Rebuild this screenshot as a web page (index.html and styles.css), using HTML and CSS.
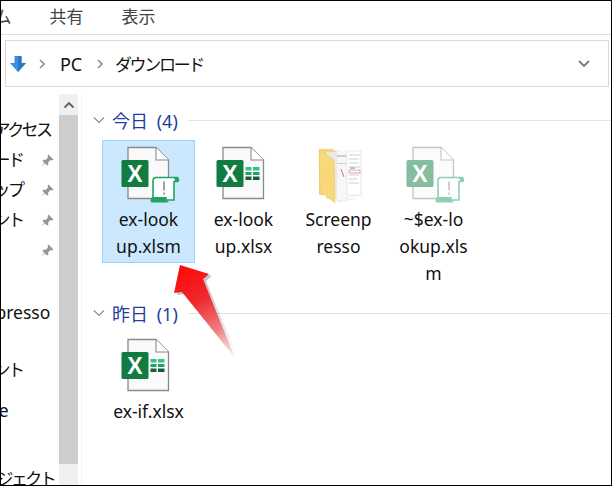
FILE: index.html
```html
<!DOCTYPE html>
<html lang="ja">
<head>
<meta charset="utf-8">
<title>ダウンロード</title>
<link rel="stylesheet" href="styles.css">
</head>
<body>
<svg class="defs" width="0" height="0" aria-hidden="true">
  <defs>
    <g id="page">
      <path d="M11 4.500H39L51.500 17V55.500H11Z" fill="#fafafa" stroke="#8a8a8a" stroke-width="1.300"/>
      <path d="M39 4.500V17H51.500" fill="#fff" stroke="#8a8a8a" stroke-width="1.100"/>
    </g>
    <g id="xl">
      <rect x="4.500" y="17" width="27" height="27" rx="1.500" fill="#107c41"/>
      <text x="18" y="38.500" class="xl-letter">X</text>
    </g>
    <g id="xlsx">
      <use href="#page"/>
      <use href="#xl"/>
      <path d="M33.500 24h6v3.500h-6zM41 24h6.500v3.500H41z" fill="#33c481"/>
      <path d="M33.500 29h6v3h-6zM41 29h6.500v3H41z" fill="#21a366"/>
      <path d="M33.500 33.500h6v3.500h-6zM41 33.500h6.500v3.500H41z" fill="#185c37"/>
    </g>
    <g id="xlsm">
      <use href="#page"/>
      <use href="#xl"/>
      <path d="M39 34.500C36.500 34.500 36 36 36 38V57H57V38.500H60.500C61.500 38.500 62 36 60.500 34.500Z" fill="#fff" stroke="#21a366" stroke-width="1.600"/>
      <path d="M33.500 57.500C33.500 55 35 54 37 54H50C49 55.500 50 58 52 59.500H35C34 59.500 33.500 58.500 33.500 57.500Z" fill="#21a366"/>
      <path d="M56 34.500H60.500C62 35.500 61.500 38.500 60.500 38.500H58C58 36.500 57.500 35 56 34.500Z" fill="#21a366"/>
      <path d="M47 38.500V47.500" stroke="#8a8a8a" stroke-width="1.600" fill="none"/>
      <path d="M47 49.500V51.500" stroke="#8a8a8a" stroke-width="1.600" fill="none"/>
    </g>
    <g id="pin">
      <path d="M7.500 1.500L12.500 6.500L11 7.500L9.500 7L7 9.500L7.500 11.500L6 12.500L3.700 10.300L1 13L.8 12.800L3.300 9.800L1.500 8L2.500 6.500L4.500 7L7 4.500L6.500 3Z" fill="#8d98a5"/>
    </g>
  </defs>
</svg>
<div class="window">
  <nav class="tabs">
    <span class="tab tab-home">ホーム</span>
    <span class="tab tab-share">共有</span>
    <span class="tab">表示</span>
  </nav>
  <div class="address">
    <svg class="dl-icon" width="18" height="18" viewBox="0 0 18 18"><path d="M5.500 1H12.500V8H17L9 17L1 8H5.500Z" fill="#3d8fdd"/><path d="M9 1H12.500V8H17L9 17Z" fill="#2878c8"/></svg>
    <svg class="crumb-sep" width="8" height="10" viewBox="0 0 8 10"><path d="M2 1L6 5L2 9" fill="none" stroke="#8a8a8a" stroke-width="1.600"/></svg>
    <span class="crumb">PC</span>
    <svg class="crumb-sep" width="8" height="10" viewBox="0 0 8 10"><path d="M2 1L6 5L2 9" fill="none" stroke="#8a8a8a" stroke-width="1.600"/></svg>
    <span class="crumb crumb-kana">ダウンロード</span>
    <svg class="addr-drop" width="14" height="9" viewBox="0 0 14 9"><path d="M2 2L7 7L12 2" fill="none" stroke="#7a7a7a" stroke-width="1.800"/></svg>
  </div>
  <div class="main">
    <aside class="tree">
      <ul class="tree-list">
        <li class="row kana">クイックアクセス</li>
        <li class="row kana">ダウンロード<svg class="pin" width="14" height="14" viewBox="0 0 14 14"><use href="#pin"/></svg></li>
        <li class="row kana">デスクトップ<svg class="pin" width="14" height="14" viewBox="0 0 14 14"><use href="#pin"/></svg></li>
        <li class="row kana">ドキュメント<svg class="pin" width="14" height="14" viewBox="0 0 14 14"><use href="#pin"/></svg></li>
        <li class="row kana">ピクチャ<svg class="pin" width="14" height="14" viewBox="0 0 14 14"><use href="#pin"/></svg></li>
        <li class="row row-blank"></li>
        <li class="row row-latin">Screenpresso</li>
        <li class="row row-gap kana">ドキュメント</li>
        <li class="row row-gap2 row-one">OneDrive</li>
        <li class="row"></li>
        <li class="row row-end kana">3D オブジェクト</li>
      </ul>
    </aside>
    <div class="scrollbar">
      <div class="scroll-btn"><svg width="12" height="8" viewBox="0 0 12 8"><path d="M1.500 6.500L6 2L10.500 6.500" fill="none" stroke="#606060" stroke-width="1.800"/></svg></div>
      <div class="scroll-thumb"></div>
      <div class="scroll-end"></div>
    </div>
    <section class="files">
      <header class="group-head">
        <svg width="12" height="8" viewBox="0 0 12 8"><path d="M1 1.500L6 6.500L11 1.500" fill="none" stroke="#8a8a8a" stroke-width="1.100"/></svg>
        <h2 class="group-title">今日 (4)</h2>
        <span class="group-line"></span>
      </header>
      <div class="grid">
        <div class="item selected">
          <svg class="file-icon" width="64" height="64" viewBox="0 0 64 64"><use href="#xlsm"/></svg>
          <span class="name">ex-look<br>up.xlsm</span>
        </div>
        <div class="item">
          <svg class="file-icon" width="64" height="64" viewBox="0 0 64 64"><use href="#xlsx"/></svg>
          <span class="name">ex-look<br>up.xlsx</span>
        </div>
        <div class="item">
          <svg class="file-icon" width="64" height="64" viewBox="0 0 64 64">
            <path d="M12 6H26L28 8H55V52H12Z" fill="#f3d37c"/>
            <path d="M19 9H42V56H19Z" fill="#e9e9e9"/>
            <path d="M30 7L55 8V53L30 57Z" fill="#f7f7f7"/>
            <path d="M40 8H54V52H40Z" fill="#fff" stroke="#dcdcdc" stroke-width=".6"/>
            <path d="M30 12H39V14H30ZM30 20H39V21H30Z" fill="#cfcfcf"/>
            <path d="M42 12H53M42 16H52M42 20H52M42 24H53M42 32H52M42 36H50M42 40H52" stroke="#c4c4c4" stroke-width=".8"/>
            <path d="M42 27H53V30H42Z" fill="none" stroke="#d9918f" stroke-width=".8"/>
            <path d="M34 26L37 34" stroke="#de6a6a" stroke-width="1"/>
            <path d="M43 24H48V26H43Z" fill="#a9c7e4"/>
            <path d="M12 6L27 17L28 60L13 48Z" fill="#f8d878" stroke="#e8c262" stroke-width=".5"/>
            <path d="M30 57L58 55L30 59Z" fill="#ececec"/>
          </svg>
          <span class="name">Screenp<br>resso</span>
        </div>
        <div class="item ghost">
          <svg class="file-icon" width="64" height="64" viewBox="0 0 64 64"><use href="#xlsm"/></svg>
          <span class="name">~$ex-lo<br>okup.xls<br>m</span>
        </div>
      </div>
      <header class="group-head group-second">
        <svg width="12" height="8" viewBox="0 0 12 8"><path d="M1 1.500L6 6.500L11 1.500" fill="none" stroke="#8a8a8a" stroke-width="1.100"/></svg>
        <h2 class="group-title">昨日 (1)</h2>
        <span class="group-line"></span>
      </header>
      <div class="grid grid-second">
        <div class="item">
          <svg class="file-icon" width="64" height="64" viewBox="0 0 64 64"><use href="#xlsx"/></svg>
          <span class="name">ex-if.xlsx</span>
        </div>
      </div>
    </section>
  </div>
  <svg class="callout" width="612" height="486" viewBox="0 0 612 486" aria-hidden="true">
    <defs>
      <linearGradient id="arrow-fill" gradientUnits="userSpaceOnUse" x1="182" y1="268" x2="234" y2="356">
        <stop offset="0" stop-color="#ff0a0a"/>
        <stop offset=".35" stop-color="#f0262b"/>
        <stop offset=".7" stop-color="#ee7f82"/>
        <stop offset="1" stop-color="#f6c5c5" stop-opacity=".4"/>
      </linearGradient>
      <linearGradient id="arrow-shade" gradientUnits="userSpaceOnUse" x1="185" y1="270" x2="235" y2="358">
        <stop offset="0" stop-color="#000" stop-opacity=".28"/>
        <stop offset="1" stop-color="#000" stop-opacity="0"/>
      </linearGradient>
    </defs>
    <path d="M183 267L212 276L206 281L238 358L185 294L177 295Z" fill="url(#arrow-shade)"/>
    <path d="M180 265L209 274L203 279L235 358L182 292L174 293Z" fill="url(#arrow-fill)"/>
  </svg>
</div>
</body>
</html>
```
FILE: styles.css
```css
* { box-sizing: border-box; margin: 0; padding: 0; }
html, body { width: 612px; height: 486px; overflow: hidden; background: #fff; }
body {
  font-family: "Noto Sans", "Noto Sans CJK JP", sans-serif;
  font-size: 16px;
  color: #111;
}
.defs { position: absolute; }
.xl-letter {
  font-family: "Liberation Sans", sans-serif;
  font-weight: 700;
  font-size: 23px;
  fill: #fff;
  text-anchor: middle;
}
.window {
  position: relative;
  width: 612px;
  height: 486px;
  border: 1px solid #000;
  overflow: hidden;
  display: flex;
  flex-direction: column;
}
.tabs {
  height: 34px;
  flex: none;
  display: flex;
  align-items: center;
  border-bottom: 1px solid #dcdcdc;
  padding-bottom: 5px;
  color: #444;
  font-size: 17px;
}
.tab { white-space: nowrap; }
.tab-home { margin-left: -40px; }
.tab-share { margin-left: 38px; margin-right: 38px; }
.address {
  flex: none;
  height: 47px;
  margin: 5px 2px 0 4px;
  border: 1px solid #d9d9d9;
  display: flex;
  align-items: center;
  padding: 0 0 0 3px;
}
.dl-icon { margin-right: 11px; }
.crumb-sep { margin-right: 14px; }
.crumb { font-size: 18px; margin-right: 14px; letter-spacing: -.2px; }
.crumb-kana { font-size: 17px; letter-spacing: -2.300px; margin-left: -3px; }
.addr-drop { margin-left: auto; margin-right: 17px; }
.main { flex: 1; min-height: 0; display: flex; margin-top: 7px; }
.tree { width: 58px; flex: none; overflow: hidden; position: relative; }
.tree-list { list-style: none; margin-left: -65px; width: 123px; padding-top: 21px; }
.row {
  height: 30px;
  line-height: 30px;
  position: relative;
  white-space: nowrap;
  font-size: 17px;
}
.kana { letter-spacing: -2.600px; }
.row-blank { height: 32px; }
.row-latin { font-size: 17.500px; padding-left: 4px; }
.row-gap { margin-top: 28px; }
.row-gap2 { margin-top: 10px; }
.row-one { font-size: 17.500px; margin-left: -5px; }
.row-end { margin-top: 9px; padding-left: 13px; }
.pin { position: absolute; right: 4px; top: 8px; }
.scrollbar {
  width: 19px;
  flex: none;
  display: flex;
  flex-direction: column;
  background: #f0f0f0;
}
.scroll-btn { height: 21px; flex: none; display: flex; align-items: center; justify-content: center; }
.scroll-thumb { height: 349px; flex: none; background: #cdcdcd; }
.scroll-end { flex: 1; }
.files {
  flex: 1;
  min-width: 0;
  margin-left: 3px;
  border-left: 1px solid #f2f2f2;
  padding: 16px 0 0 20px;
  position: relative;
}
.group-head { height: 20px; display: flex; align-items: center; margin-left: -9px; }
.group-second { margin-top: 13px; }
.group-title {
  font-size: 18px;
  font-weight: 400;
  color: #1f3f9e;
  margin-left: 7px;
  white-space: nowrap;
  word-spacing: 4px;
}
.group-line { flex: 1; height: 1px; background: #e2e2e2; margin-left: 10px; }
.grid { display: flex; gap: 2px; margin-top: 10px; align-items: flex-start; }
.grid-second { margin-top: 9px; }
.item {
  width: 93px;
  flex: none;
  padding: 3px 0 1px;
  border: 1px solid transparent;
  display: flex;
  flex-direction: column;
  align-items: center;
}
.selected { background: #cce8ff; border-color: #99d1ff; }
.ghost .file-icon { opacity: .5; }
.file-icon { display: block; flex: none; margin-top: -1px; }
.name {
  display: block;
  line-height: 27px;
  text-align: center;
  font-size: 17.500px;
  margin-top: -1px;
  margin-bottom: 1px;
  white-space: nowrap;
}
.callout { position: absolute; left: -1px; top: -1px; pointer-events: none; }
```
